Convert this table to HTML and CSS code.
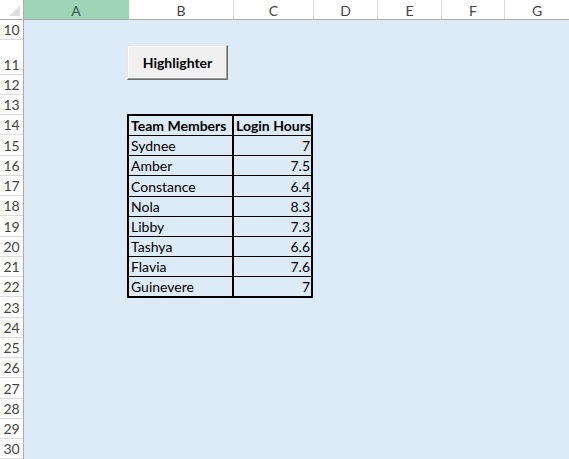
FILE: index.html
```html
<!DOCTYPE html>
<html>
<head>
<meta charset="utf-8">
<link rel="stylesheet" href="styles.css">
</head>
<body>
<div class="app">
  <div class="colheads">
    <div class="corner"><span class="tri"></span></div>
    <div class="ch ca sel">A</div>
    <div class="ch cb">B</div>
    <div class="ch cc">C</div>
    <div class="ch cd">D</div>
    <div class="ch ce">E</div>
    <div class="ch cf">F</div>
    <div class="ch cg">G</div>
  </div>
  <div class="body">
    <div class="rowheads">
      <div class="rh">10</div>
      <div class="rh tall">11</div>
      <div class="rh">12</div>
      <div class="rh">13</div>
      <div class="rh r2">14</div>
      <div class="rh r2">15</div>
      <div class="rh r2">16</div>
      <div class="rh r2">17</div>
      <div class="rh r2">18</div>
      <div class="rh r2">19</div>
      <div class="rh r2">20</div>
      <div class="rh r2">21</div>
      <div class="rh r2">22</div>
      <div class="rh r2">23</div>
      <div class="rh r2">24</div>
      <div class="rh r2">25</div>
      <div class="rh r2">26</div>
      <div class="rh r2">27</div>
      <div class="rh r2">28</div>
      <div class="rh r2">29</div>
      <div class="rh r2">30</div>
      <div class="rh r2"></div>
    </div>
    <div class="sheet">
      <button class="btn">Highlighter</button>
      <div class="tbl">
        <div class="c h l">Team Members</div><div class="c h r">Login Hours</div>
        <div class="c l">Sydnee</div><div class="c r num">7</div>
        <div class="c l">Amber</div><div class="c r num">7.5</div>
        <div class="c l">Constance</div><div class="c r num">6.4</div>
        <div class="c l">Nola</div><div class="c r num">8.3</div>
        <div class="c l">Libby</div><div class="c r num">7.3</div>
        <div class="c l">Tashya</div><div class="c r num">6.6</div>
        <div class="c l">Flavia</div><div class="c r num">7.6</div>
        <div class="c l">Guinevere</div><div class="c r num">7</div>
      </div>
    </div>
  </div>
</div>
</body>
</html>
```
FILE: styles.css
```css
html, body {
  margin: 0;
  padding: 0;
  width: 569px;
  height: 459px;
  overflow: hidden;
  background: #ffffff;
}
.app {
  font-family: "Lato", "Liberation Sans", sans-serif;
  width: 569px;
  height: 459px;
  display: flex;
  flex-direction: column;
}
.colheads {
  display: flex;
  height: 19px;
  border-bottom: 1px solid #ababab;
  flex: none;
}
.corner {
  width: 23px;
  border-right: 1px solid #ababab;
  position: relative;
  flex: none;
}
.tri {
  position: absolute;
  right: 3px;
  bottom: 3px;
  width: 0;
  height: 0;
  border-left: 11px solid transparent;
  border-bottom: 11px solid #dfdfdf;
}
.ch {
  flex: none;
  border-right: 1px solid #dadada;
  color: #444;
  font-size: 14px;
  display: flex;
  align-items: center;
  justify-content: center;
  padding-top: 1px;
  box-sizing: border-box;
}
.ch.sel {
  background: #9fd5b7;
  color: #2f5a45;
  border-right-color: #9fd5b7;
}
.ca { width: 105px; }
.cb { width: 105px; }
.cc { width: 80px; }
.cd { width: 64px; }
.ce { width: 64px; }
.cf { width: 63px; }
.cg { flex: 1; border-right: none; }

.body {
  display: flex;
  flex: 1;
  overflow: hidden;
}
.rowheads {
  width: 23px;
  border-right: 1px solid #ababab;
  flex: none;
  display: flex;
  flex-direction: column;
  background: #fff;
}
.rh {
  border-bottom: 1px solid #dadada;
  flex: none;
  color: #444;
  font-size: 14px;
  display: flex;
  align-items: flex-end;
  justify-content: center;
  line-height: 17px;
  padding-bottom: 1px;
  box-sizing: content-box;
  height: 18px;
}
.rh.tall { height: 33px; }
.rh.r2 { height: 18.25px; }

.sheet {
  flex: 1;
  background: #ddebf7;
  display: flex;
  flex-direction: column;
  align-items: flex-start;
}
.btn {
  margin: 25px 0 0 103px;
  width: 101px;
  height: 35px;
  background: #f0f0f0;
  border-top: 1px solid #e6e6e6;
  border-left: 1px solid #e6e6e6;
  border-right: 1px solid #696969;
  border-bottom: 1px solid #696969;
  box-shadow: inset -1px -1px 0 #a0a0a0, inset 1px 1px 0 #ffffff;
  font-family: "Lato", "Liberation Sans", sans-serif;
  font-weight: bold;
  font-size: 14px;
  color: #000;
  padding: 0;
}
.tbl {
  margin: 34px 0 0 103px;
  display: grid;
  grid-template-columns: 103px 77px;
  grid-auto-rows: 19.125px;
  border: 2px solid #000;
  row-gap: 1px;
  background: #000;
  column-gap: 2px;
}
.c {
  background: #ddebf7;
  font-size: 14px;
  color: #000;
  display: flex;
  align-items: flex-end;
  line-height: 16px;
  padding: 0 2px 1px 2px;
  white-space: nowrap;
  overflow: hidden;
}
.c.h { font-weight: bold; }
.c.r.num { justify-content: flex-end; padding-right: 1px; }
```
